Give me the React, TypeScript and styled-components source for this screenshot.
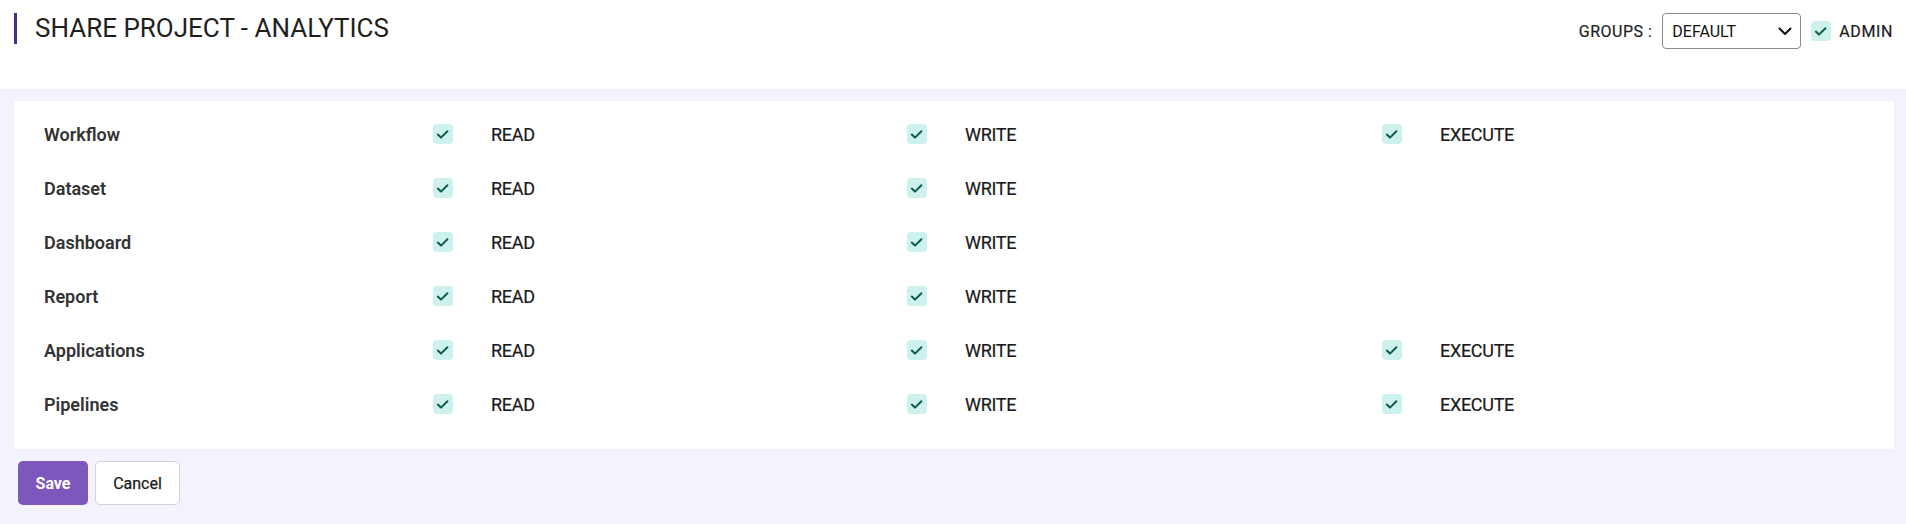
import React from "react";
import styled, { createGlobalStyle } from "styled-components";

const GlobalStyle = createGlobalStyle`
  html, body {
    margin: 0;
    padding: 0;
    background: #ffffff;
    font-family: Roboto, "Liberation Sans", Arial, sans-serif;
  }
  * { box-sizing: border-box; }
`;

const Page = styled.div`
  width: 1906px;
  min-height: 524px;
  display: flex;
  flex-direction: column;
  background: #f4f3fd;
`;

const Header = styled.header`
  height: 89px;
  background: #ffffff;
  display: flex;
  justify-content: space-between;
  align-items: flex-start;
  padding: 13px 13px 0 14px;
`;

const Title = styled.h1`
  margin: 0;
  height: 31px;
  line-height: 30px;
  border-left: 3px solid #4b2a91;
  padding-left: 18px;
  font-size: 26px;
  font-weight: 400;
  color: #1f1f1f;
  letter-spacing: 0;
`;

const Controls = styled.div`
  display: flex;
  align-items: center;
  height: 36px;
`;

const GroupLabel = styled.span`
  font-size: 16px;
  font-weight: 400;
  color: #222;
  margin-right: 10px;
  letter-spacing: 0.5px;
  -webkit-text-stroke: 0.2px #222;
`;

const SelectBox = styled.div`
  width: 139px;
  height: 36px;
  border: 1px solid #8a8a8a;
  border-radius: 4px;
  display: flex;
  align-items: center;
  justify-content: space-between;
  padding: 0 8px 0 9px;
  font-size: 16px;
  color: #111;
  margin-right: 10px;
`;

const Content = styled.main`
  padding: 12px 12px 0 14px;
  display: flex;
  flex-direction: column;
`;

const Card = styled.section`
  background: #ffffff;
  padding: 6px 0 18px 30px;
  display: flex;
  flex-direction: column;
`;

const Row = styled.div`
  display: grid;
  grid-template-columns: 389px 474px 475px 1fr;
  height: 54px;
  align-items: center;
`;

const RowLabel = styled.div`
  font-size: 18px;
  font-weight: 600;
  color: #333333;
`;

const PermCell = styled.label<{ $gap?: number }>`
  display: flex;
  align-items: center;
  gap: ${(p) => p.$gap ?? 38}px;
`;

const PermText = styled.span`
  font-size: 18px;
  font-weight: 400;
  color: #1a1a1a;
  padding-top: 1px;
  letter-spacing: -0.3px;
  -webkit-text-stroke: 0.2px #1a1a1a;
`;

const AdminText = styled.span`
  font-size: 16px;
  font-weight: 400;
  color: #1a1a1a;
  letter-spacing: 0.6px;
  -webkit-text-stroke: 0.2px #1a1a1a;
`;

const Box = styled.span`
  width: 20px;
  height: 20px;
  border-radius: 4px;
  background: #cdf1ec;
  display: inline-flex;
  align-items: center;
  justify-content: center;
  flex: none;
`;

const Actions = styled.div`
  display: flex;
  gap: 7px;
  padding: 12px 0 0 4px;
`;

const Button = styled.button<{ $primary?: boolean }>`
  height: 44px;
  border-radius: 5px;
  font-family: Roboto, "Liberation Sans", Arial, sans-serif;
  font-size: 16px;
  cursor: pointer;
  ${(p) =>
    p.$primary
      ? `
    width: 70px;
    background: #7e57bd;
    color: #fff;
    border: none;
    font-weight: 700;
  `
      : `
    width: 85px;
    background: #fff;
    color: #1a1a1a;
    border: 1px solid #d3d3dc;
    font-weight: 400;
    -webkit-text-stroke: 0.25px #1a1a1a;
  `}
`;

const Check = () => (
  <Box>
    <svg width="20" height="20" viewBox="0 0 20 20">
      <path
        d="M4.8 10.6 L8 13.6 L14.4 7.2"
        fill="none"
        stroke="#0f5b4b"
        strokeWidth="2"
        strokeLinecap="round"
        strokeLinejoin="round"
      />
    </svg>
  </Box>
);

const Chevron = () => (
  <svg width="14" height="9" viewBox="0 0 14 9">
    <path
      d="M1.5 1.5 L7 7 L12.5 1.5"
      fill="none"
      stroke="#111"
      strokeWidth="2"
      strokeLinecap="round"
      strokeLinejoin="round"
    />
  </svg>
);

type Perm = "READ" | "WRITE" | "EXECUTE";

const rows: { name: string; perms: Perm[] }[] = [
  { name: "Workflow", perms: ["READ", "WRITE", "EXECUTE"] },
  { name: "Dataset", perms: ["READ", "WRITE"] },
  { name: "Dashboard", perms: ["READ", "WRITE"] },
  { name: "Report", perms: ["READ", "WRITE"] },
  { name: "Applications", perms: ["READ", "WRITE", "EXECUTE"] },
  { name: "Pipelines", perms: ["READ", "WRITE", "EXECUTE"] },
];

export default function App() {
  return (
    <>
      <GlobalStyle />
      <Page>
        <Header>
          <Title>SHARE PROJECT - ANALYTICS</Title>
          <Controls>
            <GroupLabel>GROUPS :</GroupLabel>
            <SelectBox>
              <span>DEFAULT</span>
              <Chevron />
            </SelectBox>
            <PermCell $gap={8}>
              <Check />
              <AdminText>ADMIN</AdminText>
            </PermCell>
          </Controls>
        </Header>
        <Content>
          <Card>
            {rows.map((r) => (
              <Row key={r.name}>
                <RowLabel>{r.name}</RowLabel>
                {r.perms.map((p) => (
                  <PermCell key={p}>
                    <Check />
                    <PermText>{p}</PermText>
                  </PermCell>
                ))}
              </Row>
            ))}
          </Card>
          <Actions>
            <Button $primary>Save</Button>
            <Button>Cancel</Button>
          </Actions>
        </Content>
      </Page>
    </>
  );
}
